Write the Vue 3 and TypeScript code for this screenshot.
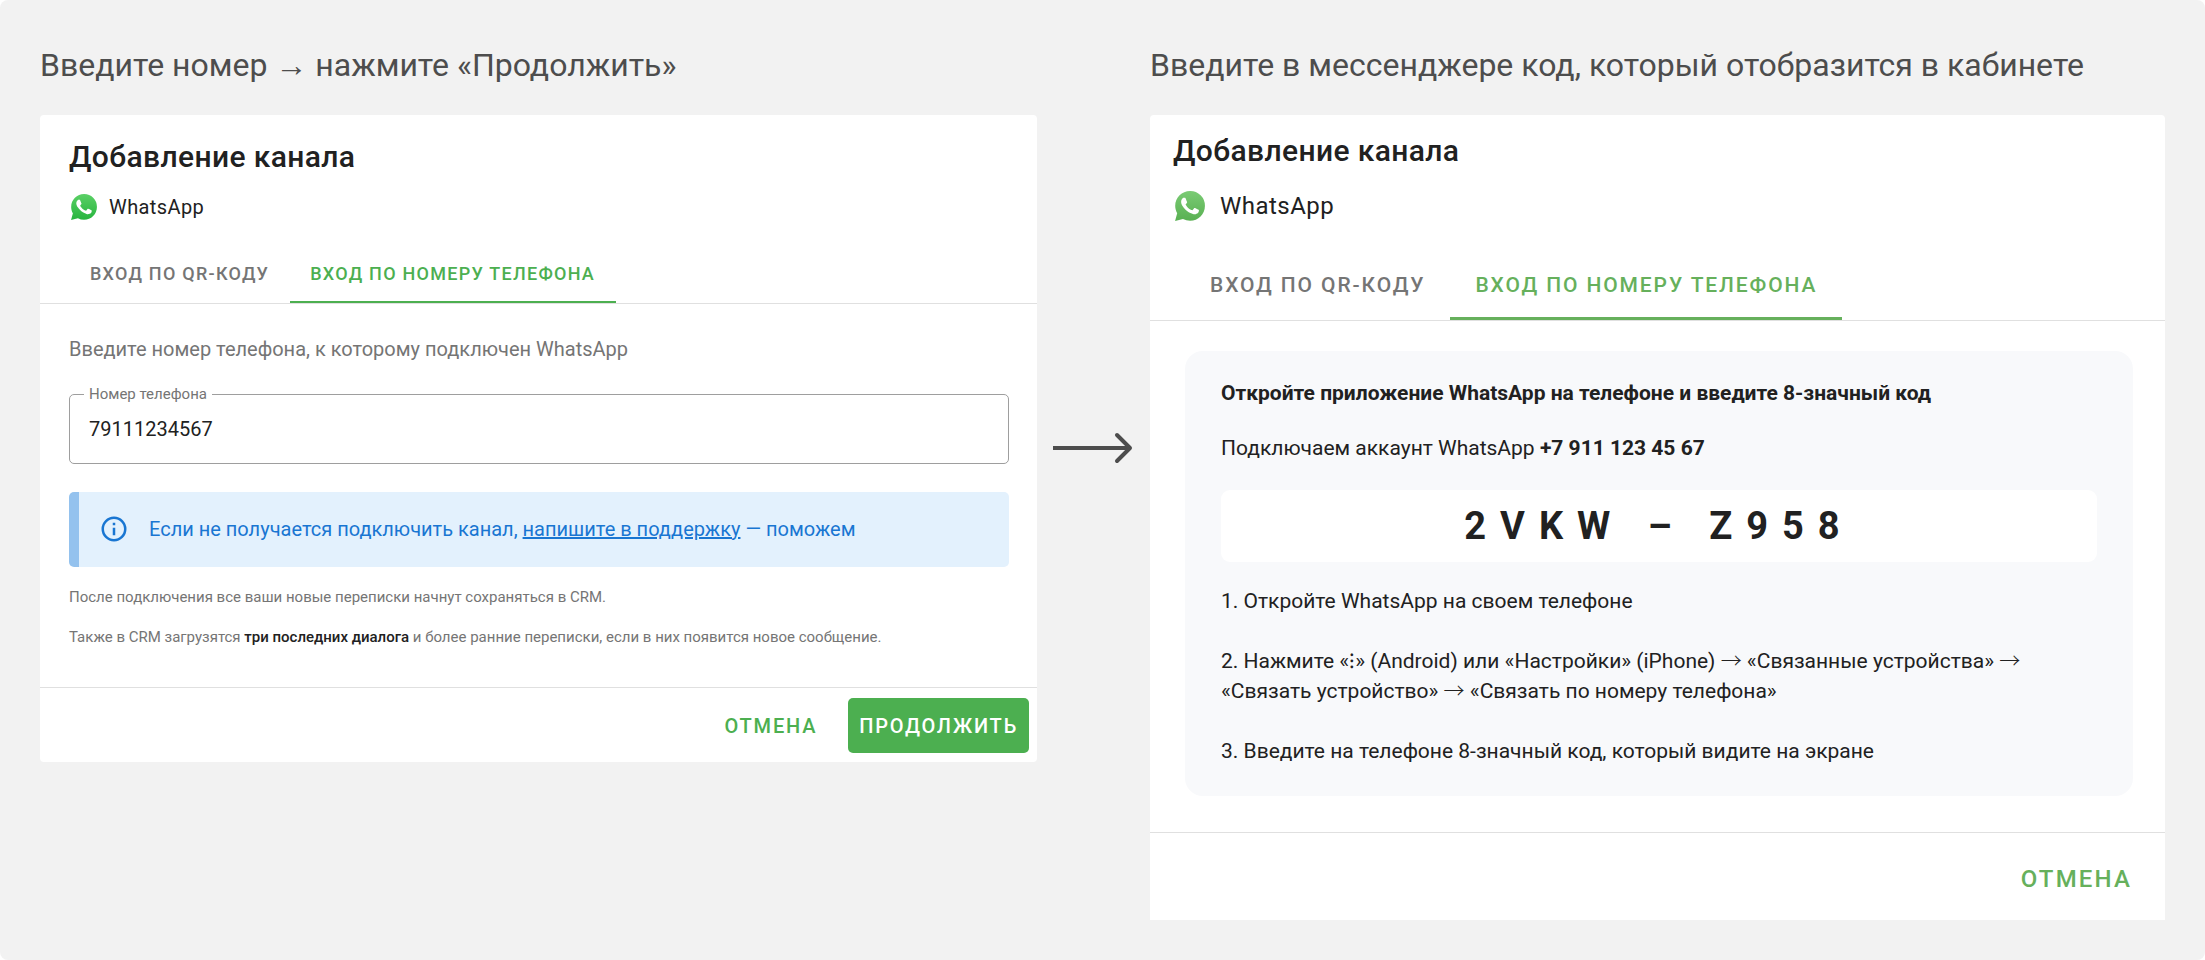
<script setup lang="ts">
import { ref } from 'vue'

const phone = ref('79111234567')
const tabs = ['Вход по QR-коду', 'Вход по номеру телефона']
const bubble =
  'M12.05 0C5.495 0 .16 5.335.157 11.892c0 2.096.547 4.142 1.588 5.945L.057 24l6.305-1.654a11.882 11.882 0 005.683 1.448h.005c6.554 0 11.89-5.335 11.893-11.893A11.821 11.821 0 0012.05 0z'
const handset =
  'M17.472 14.382c-.297-.149-1.758-.867-2.03-.967-.273-.099-.471-.148-.67.15-.197.297-.767.966-.94 1.164-.173.199-.347.223-.644.075-.297-.15-1.255-.463-2.39-1.475-.883-.788-1.48-1.761-1.653-2.059-.173-.297-.018-.458.13-.606.134-.133.298-.347.446-.52.149-.174.198-.298.298-.497.099-.198.05-.371-.025-.52-.075-.149-.669-1.612-.916-2.207-.242-.579-.487-.5-.669-.51-.173-.008-.371-.01-.57-.01-.198 0-.52.074-.792.372-.272.297-1.04 1.016-1.04 2.479 0 1.462 1.065 2.875 1.213 3.074.149.198 2.096 3.2 5.077 4.487.709.306 1.262.489 1.694.625.712.227 1.36.195 1.871.118.571-.085 1.758-.719 2.006-1.413.248-.694.248-1.289.173-1.413-.074-.124-.272-.198-.57-.347'
</script>

<template>
  <main class="page">
    <h1 class="caption">Введите номер → нажмите «Продолжить»</h1>
    <h1 class="caption caption-code">Введите в мессенджере код, который отобразится в кабинете</h1>

    <section class="card card-phone">
      <h2 class="title">Добавление канала</h2>
      <div class="channel">
        <svg class="logo" viewBox="0 0 24 24" aria-hidden="true">
          <defs>
            <linearGradient id="wa-phone" x1="0" y1="0" x2="0" y2="1">
              <stop offset="0" stop-color="#5bd066" />
              <stop offset="1" stop-color="#27b43e" />
            </linearGradient>
          </defs>
          <path :d="bubble" fill="url(#wa-phone)" />
          <path :d="handset" fill="#fff" transform="translate(-2.2 -2.2) scale(1.18)" />
        </svg>
        <span>WhatsApp</span>
      </div>
      <div class="tabs" role="tablist">
        <button v-for="(tab, i) in tabs" :key="tab" type="button" role="tab" class="tab" :class="{ active: i === 1 }" :aria-selected="i === 1">{{ tab }}</button>
      </div>
      <div class="body">
        <p class="lead">Введите номер телефона, к которому подключен WhatsApp</p>
        <fieldset class="field">
          <legend><label for="phone">Номер телефона</label></legend>
          <input id="phone" v-model="phone" type="tel" />
        </fieldset>
        <div class="alert">
          <svg class="info" viewBox="0 0 24 24" aria-hidden="true">
            <path fill="currentColor" d="M11 9h2V7h-2m1 13c-4.41 0-8-3.59-8-8s3.59-8 8-8 8 3.59 8 8-3.59 8-8 8m0-18A10 10 0 0 0 2 12a10 10 0 0 0 10 10 10 10 0 0 0 10-10A10 10 0 0 0 12 2m-1 15h2v-6h-2v6z" />
          </svg>
          <p>Если не получается подключить канал, <a href="#">напишите в поддержку</a> — поможем</p>
        </div>
        <p class="note">После подключения все ваши новые переписки начнут сохраняться в CRM.</p>
        <p class="note">Также в CRM загрузятся <strong>три последних диалога</strong> и более ранние переписки, если в них появится новое сообщение.</p>
      </div>
      <div class="actions">
        <button type="button" class="btn">Отмена</button>
        <button type="button" class="btn primary">Продолжить</button>
      </div>
    </section>

    <svg class="arrow" viewBox="0 0 80 32" aria-hidden="true">
      <path d="M0 16h76" fill="none" stroke="#4d4d4d" stroke-width="4" />
      <path d="M64 3l13 13-13 13" fill="none" stroke="#4d4d4d" stroke-width="4" stroke-linejoin="round" stroke-linecap="round" />
    </svg>

    <section class="card card-code">
      <h2 class="title">Добавление канала</h2>
      <div class="channel">
        <svg class="logo" viewBox="0 0 24 24" aria-hidden="true">
          <defs>
            <linearGradient id="wa-code" x1="0" y1="0" x2="0" y2="1">
              <stop offset="0" stop-color="#7acb74" />
              <stop offset="1" stop-color="#59b052" />
            </linearGradient>
          </defs>
          <path :d="bubble" fill="url(#wa-code)" />
          <path :d="handset" fill="#fff" transform="translate(-2.2 -2.2) scale(1.18)" />
        </svg>
        <span>WhatsApp</span>
      </div>
      <div class="tabs" role="tablist">
        <button v-for="(tab, i) in tabs" :key="tab" type="button" role="tab" class="tab" :class="{ active: i === 1 }" :aria-selected="i === 1">{{ tab }}</button>
      </div>
      <div class="body">
        <div class="panel">
          <p class="strong">Откройте приложение WhatsApp на телефоне и введите 8-значный код</p>
          <p>Подключаем аккаунт WhatsApp <strong>+7 911 123 45 67</strong></p>
          <div class="code">2VKW – Z958</div>
          <p class="step">1. Откройте WhatsApp на своем телефоне</p>
          <p class="step">
            2. Нажмите «⁝» (Android) или «Настройки» (iPhone) <span class="to">→</span>
            «Связанные устройства» <span class="to">→</span> «Связать устройство» <span class="to">→</span>
            «Связать по номеру телефона»
          </p>
          <p class="step">3. Введите на телефоне 8-значный код, который видите на экране</p>
        </div>
      </div>
      <div class="actions">
        <button type="button" class="btn">Отмена</button>
      </div>
    </section>
  </main>
</template>

<style>
body {
  margin: 0;
  background: #fff;
}
</style>

<style scoped>
.page {
  box-sizing: border-box;
  min-height: 100vh;
  padding: 40px;
  display: grid;
  grid-template-columns: minmax(0, 997fr) 113px minmax(0, 1015fr);
  grid-template-rows: auto 1fr;
  row-gap: 25px;
  align-items: start;
  background: #f2f2f2;
  border-radius: 8px;
  font-family: Roboto, "Liberation Sans", sans-serif;
  color: #212121;
}
p,
h1,
h2 {
  margin: 0;
}
.caption {
  font-size: 32px;
  line-height: 50px;
  font-weight: 400;
  color: #4d4d4d;
}
.caption-code {
  grid-column: 3;
}
.card {
  --green: #4caf50;
  background: #fff;
  border-radius: 4px;
}
.card-code {
  --green: #66b05c;
  border-radius: 4px 4px 0 0;
}
.title {
  font-size: 30px;
  line-height: 40px;
  font-weight: 500;
  letter-spacing: 0.0125em;
  padding: 22px 29px 0;
}
.channel {
  display: flex;
  align-items: center;
  gap: 12px;
  margin: 16px 29px 0;
  height: 28px;
  font-size: 20px;
  letter-spacing: 0.02em;
}
.logo {
  width: 26px;
  height: 26px;
  margin-left: 2px;
}
.tabs {
  display: flex;
  margin-top: 23px;
  padding-left: 30px;
  height: 59px;
  border-bottom: 1px solid #e0e0e0;
}
.tab {
  border: 0;
  border-bottom: 2px solid transparent;
  padding: 2px 21px 0 20px;
  background: none;
  font: 500 18px Roboto, "Liberation Sans", sans-serif;
  letter-spacing: 0.07em;
  text-transform: uppercase;
  color: #757575;
}
.tab.active {
  color: var(--green);
  border-bottom-color: var(--green);
}
.body {
  padding: 30px 28px 40px 29px;
}
.lead {
  font-size: 20px;
  line-height: 30px;
  color: #757575;
}
.field {
  margin: 20px 0 0;
  padding: 0 0 0 14px;
  min-width: 0;
  border: 1px solid #9e9e9e;
  border-radius: 5px;
}
.field legend {
  padding: 0 5px;
  font-size: 15px;
  line-height: 20px;
  color: #757575;
}
.field input {
  display: block;
  box-sizing: border-box;
  width: 100%;
  height: 59px;
  padding: 0 5px 10px;
  border: 0;
  outline: 0;
  background: none;
  font: 20px Roboto, "Liberation Sans", sans-serif;
  color: #212121;
}
.alert {
  display: flex;
  align-items: center;
  gap: 20px;
  box-sizing: border-box;
  margin-top: 28px;
  min-height: 75px;
  padding: 0 0 2px 20px;
  border-left: 10px solid #94c2ee;
  border-radius: 5px;
  background: #e3f1fd;
  color: #1976d2;
  font-size: 20px;
  line-height: 30px;
}
.alert a {
  color: inherit;
}
.info {
  width: 30px;
  height: 30px;
}
.note {
  margin-top: 20px;
  font-size: 15px;
  line-height: 20px;
  color: #757575;
}
.note strong {
  font-weight: 500;
  color: #212121;
}
.actions {
  display: flex;
  justify-content: flex-end;
  gap: 20px;
  padding: 10px 8px 9px;
  border-top: 1px solid #e0e0e0;
}
.btn {
  height: 55px;
  padding: 0 11px;
  border: 0;
  border-radius: 5px;
  background: none;
  font: 500 20px Roboto, "Liberation Sans", sans-serif;
  letter-spacing: 0.09em;
  text-transform: uppercase;
  color: var(--green);
}
.btn.primary {
  background: var(--green);
  color: #fff;
}
.arrow {
  width: 80px;
  height: 32px;
  margin: 317px 0 0 16px;
}
.card-code .title {
  padding: 16px 23px 0;
}
.card-code .channel {
  gap: 15px;
  margin: 20px 23px 0;
  height: 30px;
  font-size: 24px;
}
.card-code .logo {
  width: 30px;
  height: 30px;
}
.card-code .tabs {
  margin-top: 29px;
  padding-left: 35px;
  height: 70px;
}
.card-code .tab {
  border-bottom-width: 3px;
  padding: 2px 25px 0;
  font-size: 21px;
}
.card-code .tab,
.card-code .btn {
  letter-spacing: 0.09em;
}
.card-code .body {
  padding: 30px 32px 36px 35px;
}
.panel {
  padding: 27px 36px 30px;
  border-radius: 18px;
  background: #f8f9fb;
  font-size: 21px;
  line-height: 30px;
}
.panel p + p {
  margin-top: 25px;
}
.panel .strong {
  font-weight: 700;
}
.code {
  margin: 27px 0 24px;
  border-radius: 9px;
  background: #fff;
  font-size: 38px;
  line-height: 72px;
  font-weight: 700;
  letter-spacing: 14px;
  text-align: center;
}
.panel .step + .step {
  margin-top: 30px;
}
.to {
  font-family: "Noto Sans CJK SC", sans-serif;
  font-weight: 300;
  line-height: 20px;
}
.card-code .actions {
  padding: 18px 22px 14px;
}
.card-code .btn {
  font-size: 24px;
}
</style>
